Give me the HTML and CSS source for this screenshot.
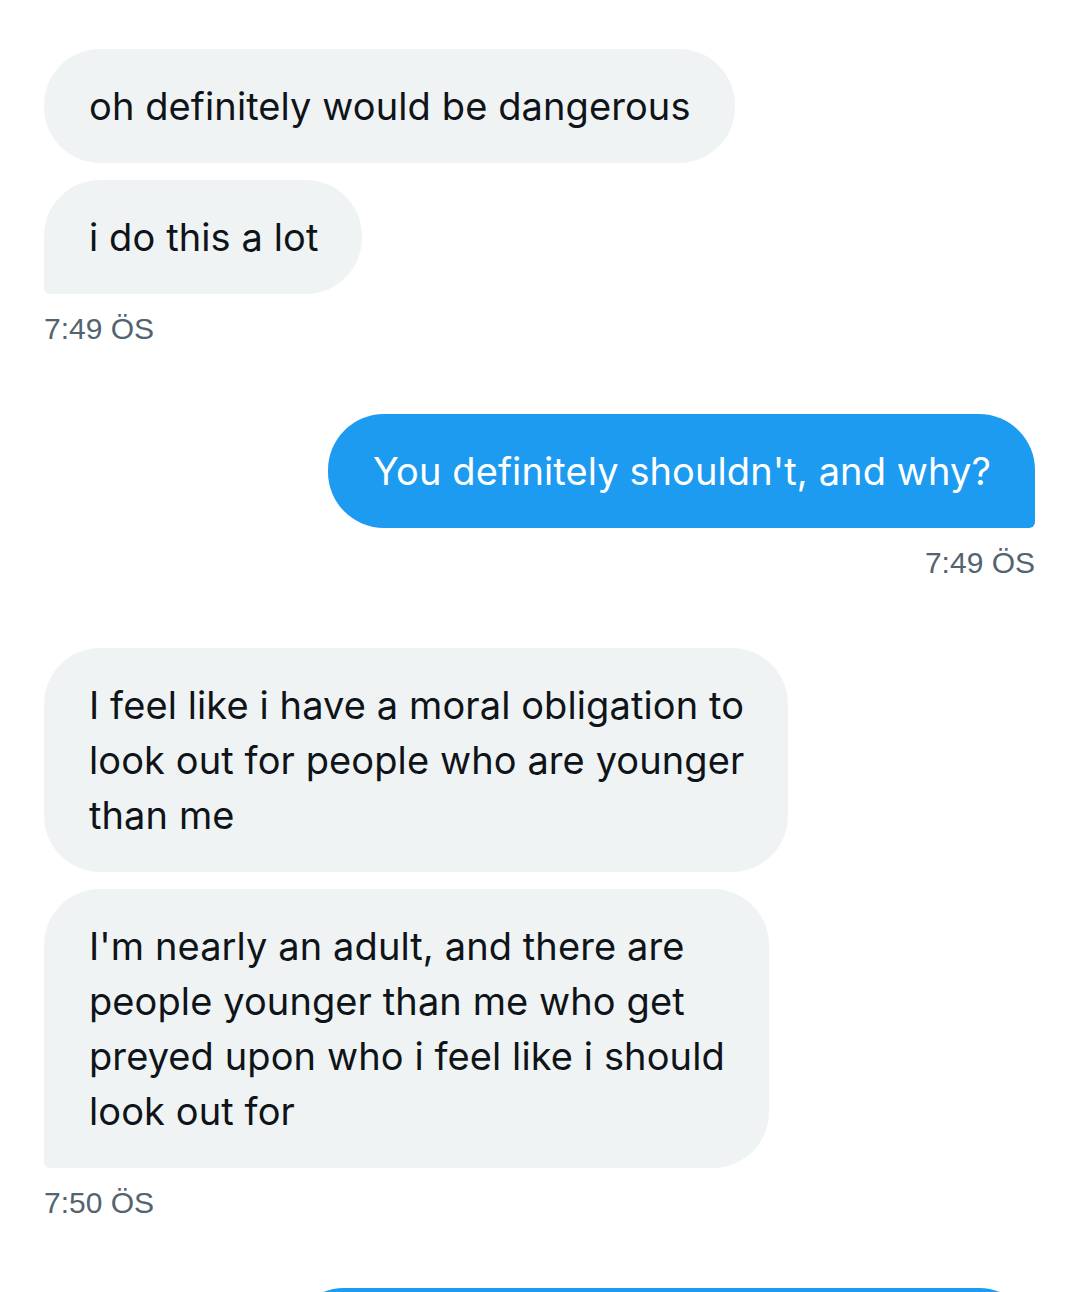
FILE: index.html
```html
<!DOCTYPE html>
<html lang="en">
<head>
<meta charset="utf-8">
<title>Messages</title>
<link rel="stylesheet" href="styles.css">
</head>
<body>
<main class="thread">
  <section class="group group-in">
    <div class="bubble in">oh definitely would be dangerous</div>
    <div class="bubble in last">i do this a lot</div>
    <div class="time">7:49 ÖS</div>
  </section>

  <section class="group group-out">
    <div class="bubble out last">You definitely shouldn't, and why?</div>
    <div class="time">7:49 ÖS</div>
  </section>

  <section class="group group-in">
    <div class="bubble in">I feel like i have a moral obligation to<br>look out for people who are younger<br>than me</div>
    <div class="bubble in last">I'm nearly an adult, and there are<br>people younger than me who get<br>preyed upon who i feel like i should<br>look out for</div>
    <div class="time">7:50 ÖS</div>
  </section>

  <section class="group group-out">
    <div class="bubble out next">&nbsp;</div>
  </section>
</main>
</body>
</html>
```

FILE: styles.css
```css
html, body {
  margin: 0;
  padding: 0;
  background: #ffffff;
}

.thread {
  padding: 49px 45px 0 44px;
  display: flex;
  flex-direction: column;
  gap: 68px;
}

.group {
  display: flex;
  flex-direction: column;
  gap: 17px;
}

.group-in {
  align-items: flex-start;
}

.group-out {
  align-items: flex-end;
}

.bubble {
  font-family: Inter, "Noto Sans", sans-serif;
  font-size: 38px;
  letter-spacing: 0.1px;
  line-height: 55px;
  padding: 29.5px 44px 29.5px 45px;
  border-radius: 56px;
  white-space: nowrap;
  color: #0f1419;
}

.in {
  background: #eff3f4;
}

.in.last {
  border-bottom-left-radius: 6px;
}

.out {
  background: #1d9bf0;
  color: #ffffff;
}

.out.last {
  border-bottom-right-radius: 6px;
}

.next {
  width: 658px;
  min-height: 220px;
}

.time {
  font-family: "Liberation Sans", Arial, sans-serif;
  font-size: 30px;
  line-height: 34px;
  color: #536471;
  margin-top: 1px;
}
```
